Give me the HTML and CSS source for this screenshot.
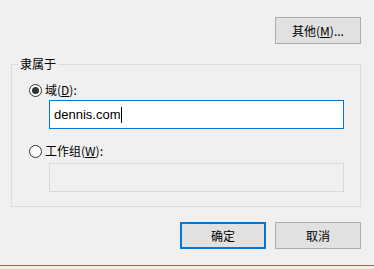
FILE: index.html
```html
<!DOCTYPE html>
<html lang="zh-CN">
<head>
    <meta charset="UTF-8">
    <title>计算机名/域更改</title>
    <link rel="stylesheet" href="styles.css">
</head>
<body>
    <div class="dialog">
        <div class="top-row">
            <button class="button">其他(<u>M</u>)...</button>
        </div>
        <fieldset class="group">
            <legend class="group-title">隶属于</legend>
            <label class="radio-row">
                <input type="radio" name="member" class="radio" checked>
                <span>域(<u>D</u>):</span>
            </label>
            <div class="textbox active">
                <span class="value">dennis.com</span><span class="caret"></span>
            </div>
            <label class="radio-row second">
                <input type="radio" name="member" class="radio">
                <span>工作组(<u>W</u>):</span>
            </label>
            <div class="textbox disabled"></div>
        </fieldset>
        <div class="button-row">
            <button class="button default">确定</button>
            <button class="button">取消</button>
        </div>
        <div class="bottom-line"></div>
    </div>
</body>
</html>
```

FILE: styles.css
```css
body {
    margin: 0;
    background-color: #f0f0f0;
    font-family: 'Noto Sans CJK SC', 'Noto Sans', sans-serif;
    font-size: 12px;
    color: #000;
}
.dialog {
    width: 374px;
    height: 269px;
    overflow: hidden;
    display: flex;
    flex-direction: column;
}
.top-row {
    display: flex;
    justify-content: flex-end;
    padding: 17px 13px 0 0;
}
.button {
    width: 86px;
    height: 27px;
    padding: 0;
    background-color: #e1e1e1;
    border: 1px solid #adadad;
    border-radius: 0;
    font-family: 'Noto Sans CJK SC', sans-serif;
    font-size: 12px;
    color: #000;
    line-height: 16px;
}
.button.default {
    border: 2px solid #0078d7;
}
.group {
    margin: 12px 13px 0 11px;
    padding: 10px 6px 14px 6px;
    border: 1px solid #dcdcdc;
    min-width: 0;
}
.group-title {
    padding: 0 2px;
    line-height: 16px;
}
.radio-row {
    display: flex;
    align-items: center;
    gap: 3px;
    height: 16px;
    margin-left: 11px;
    line-height: 16px;
}
.radio-row.second {
    margin-top: 14px;
}
.radio {
    appearance: none;
    margin: 0;
    width: 13px;
    height: 13px;
    border: 1px solid #333;
    border-radius: 50%;
    background-color: #fff;
    display: flex;
    align-items: center;
    justify-content: center;
}
.radio:checked::after {
    content: '';
    width: 7px;
    height: 7px;
    border-radius: 50%;
    background-color: #333;
}
.textbox {
    box-sizing: border-box;
    width: 295px;
    height: 29px;
    margin-left: 31px;
    display: flex;
    align-items: center;
    padding-left: 4px;
}
.textbox.active {
    margin-top: 2px;
    background-color: #fff;
    border: 1px solid #0078d7;
    font-family: 'Liberation Sans', sans-serif;
    font-size: 13px;
}
.textbox.disabled {
    margin-top: 4px;
    border: 1px solid #d9d9d9;
}
.caret {
    width: 1px;
    height: 16px;
    margin-left: 1px;
    background-color: #000;
}
.button-row {
    display: flex;
    justify-content: flex-end;
    gap: 9px;
    padding: 15px 13px 0 0;
}
.bottom-line {
    margin-top: 16px;
    height: 1px;
    background-color: #1e88e5;
}
```
